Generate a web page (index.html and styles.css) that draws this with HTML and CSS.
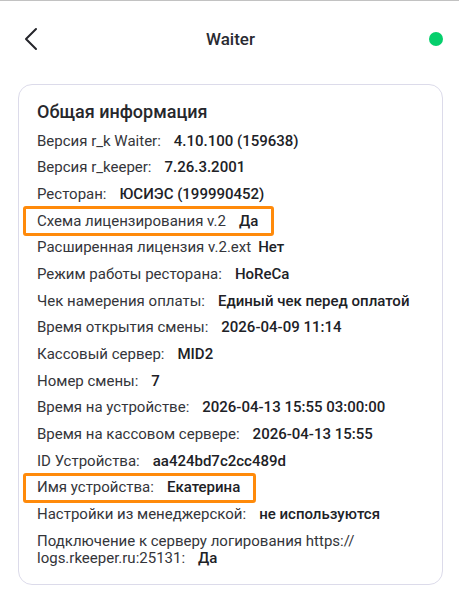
FILE: index.html
```html
<!doctype html>
<html lang="ru">

<head>
  <title>Waiter</title>
  <meta charset="utf-8" />
  <link rel="stylesheet" href="styles.css">
</head>

<body>
  <header class="topbar">
    <button class="back" type="button" aria-label="Назад">
      <svg width="14" height="24" viewBox="0 0 14 24">
        <path d="M12 2 L2 12 L12 22" fill="none" stroke="#25262b" stroke-width="2" stroke-linecap="round" stroke-linejoin="round" />
      </svg>
    </button>
    <h1 class="title">Waiter</h1>
    <span class="status"></span>
  </header>

  <section class="card">
    <h2 class="card-title">Общая информация</h2>
    <div class="row">Версия r_k Waiter:<b>4.10.100 (159638)</b></div>
    <div class="row">Версия r_keeper:<b>7.26.3.2001</b></div>
    <div class="row">Ресторан:<b>ЮСИЭС (199990452)</b></div>
    <div class="row marked">Схема лицензирования v.2<b>Да</b></div>
    <div class="row">Расширенная лицензия v.2.ext<b class="near">Нет</b></div>
    <div class="row">Режим работы ресторана:<b>HoReCa</b></div>
    <div class="row">Чек намерения оплаты:<b>Единый чек перед оплатой</b></div>
    <div class="row">Время открытия смены:<b>2026-04-09 11:14</b></div>
    <div class="row">Кассовый сервер:<b>MID2</b></div>
    <div class="row">Номер смены:<b>7</b></div>
    <div class="row">Время на устройстве:<b>2026-04-13 15:55 03:00:00</b></div>
    <div class="row">Время на кассовом сервере:<b>2026-04-13 15:55</b></div>
    <div class="row">ID Устройства:<b>aa424bd7c2cc489d</b></div>
    <div class="row marked">Имя устройства:<b>Екатерина</b></div>
    <div class="row">Настройки из менеджерской:<b>не используются</b></div>
    <div class="row">Подключение к серверу логирования https://<br>logs.rkeeper.ru:25131:<b>Да</b></div>
  </section>
</body>

</html>
```

FILE: styles.css
```css
html {
  font-family: Roboto, "Noto Sans", sans-serif;
  color: #2d2e33;
}

body {
  margin: 0;
  width: 459px;
  border-top: 1px solid #c2c2c2;
}

.topbar {
  display: flex;
  align-items: center;
  height: 76px;
  padding: 0 16px 0 24px;
}

.back {
  display: flex;
  padding: 0;
  border: none;
  background: none;
}

.title {
  flex: 1;
  margin: 0;
  padding-right: 6px;
  text-align: center;
  font-size: 17px;
  font-weight: 500;
  color: #2a2b32;
}

.status {
  width: 14px;
  height: 14px;
  border-radius: 50%;
  background-color: #05cf6c;
}

.card {
  display: flex;
  flex-direction: column;
  align-items: flex-start;
  gap: 9.67px;
  margin: 7px 16px 0 18px;
  padding: 16px 18px 17px 18px;
  border: 1px solid #dcdbea;
  border-radius: 14px;
}

.card-title {
  margin: 0;
  font-size: 18px;
  line-height: 22px;
  font-weight: 500;
  color: #26272c;
}

.row {
  font-size: 15px;
  line-height: 17px;
  color: #34353a;
}

.row b {
  margin-left: 13px;
  font-weight: 500;
  color: #202126;
}

.row b.near {
  margin-left: 7px;
}

.row.marked {
  margin: -6.5px -16px -6.5px -14px;
  padding: 3.5px 13px 3.5px 11px;
  border: 3px solid #ff8a0a;
  border-radius: 3px;
}
```
